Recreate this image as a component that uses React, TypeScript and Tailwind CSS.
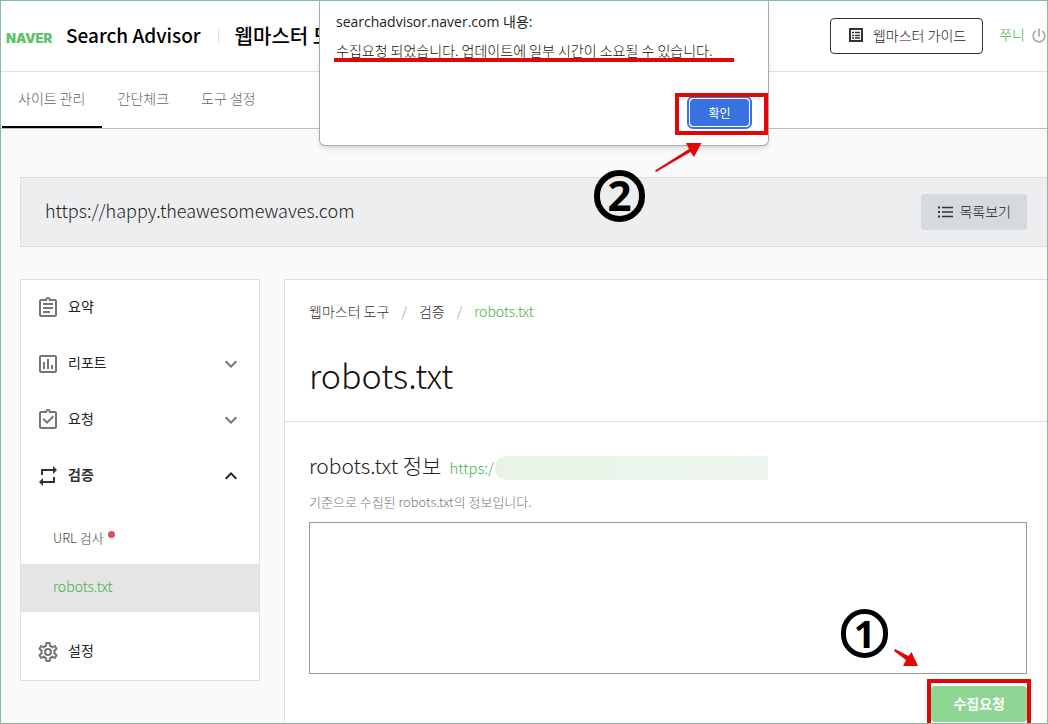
import type { ReactNode } from "react";

const ICONS = {
  clipboardText:
    "M19,3H14.82C14.4,1.84 13.3,1 12,1C10.7,1 9.6,1.84 9.18,3H5A2,2 0 0,0 3,5V19A2,2 0 0,0 5,21H19A2,2 0 0,0 21,19V5A2,2 0 0,0 19,3M12,3A1,1 0 0,1 13,4A1,1 0 0,1 12,5A1,1 0 0,1 11,4A1,1 0 0,1 12,3M5,5H19V19H5V5M7,7H17V9H7V7M7,11H17V13H7V11M7,15H14V17H7V15Z",
  chartBox:
    "M9,17H7V10H9V17M13,17H11V7H13V17M17,17H15V13H17V17M19,19H5V5H19V19.1M19,3H5C3.9,3 3,3.9 3,5V19C3,20.1 3.9,21 5,21H19C20.1,21 21,20.1 21,19V5C21,3.9 20.1,3 19,3Z",
  clipboardCheck:
    "M19,3H14.82C14.4,1.84 13.3,1 12,1C10.7,1 9.6,1.84 9.18,3H5A2,2 0 0,0 3,5V19A2,2 0 0,0 5,21H19A2,2 0 0,0 21,19V5A2,2 0 0,0 19,3M12,3A1,1 0 0,1 13,4A1,1 0 0,1 12,5A1,1 0 0,1 11,4A1,1 0 0,1 12,3M5,5H19V19H5V5M7.91,10.08L6.5,11.5L11,16L18,9L16.59,7.58L11,13.17L7.91,10.08Z",
  repeat:
    "M17,17H7V14L3,18L7,22V19H19V13H17M7,7H17V10L21,6L17,2V5H5V11H7V7Z",
  cog: "M12,8A4,4 0 0,1 16,12A4,4 0 0,1 12,16A4,4 0 0,1 8,12A4,4 0 0,1 12,8M12,10A2,2 0 0,0 10,12A2,2 0 0,0 12,14A2,2 0 0,0 14,12A2,2 0 0,0 12,10M10,22C9.75,22 9.54,21.82 9.5,21.58L9.13,18.93C8.5,18.68 7.96,18.34 7.44,17.94L4.95,18.95C4.73,19.03 4.46,18.95 4.34,18.73L2.34,15.27C2.21,15.05 2.27,14.78 2.46,14.63L4.57,12.97L4.5,12L4.57,11L2.46,9.37C2.27,9.22 2.21,8.95 2.34,8.73L4.34,5.27C4.46,5.05 4.73,4.96 4.95,5.05L7.44,6.05C7.96,5.66 8.5,5.32 9.13,5.07L9.5,2.42C9.54,2.18 9.75,2 10,2H14C14.25,2 14.46,2.18 14.5,2.42L14.87,5.07C15.5,5.32 16.04,5.66 16.56,6.05L19.05,5.05C19.27,4.96 19.54,5.05 19.66,5.27L21.66,8.73C21.79,8.95 21.73,9.22 21.54,9.37L19.43,11L19.5,12L19.43,13L21.54,14.63C21.73,14.78 21.79,15.05 21.66,15.27L19.66,18.73C19.54,18.95 19.27,19.04 19.05,18.95L16.56,17.95C16.04,18.34 15.5,18.68 14.87,18.93L14.5,21.58C14.46,21.82 14.25,22 14,22H10M11.25,4L10.88,6.61C9.68,6.86 8.62,7.5 7.85,8.39L5.44,7.35L4.69,8.65L6.8,10.2C6.4,11.37 6.4,12.64 6.8,13.8L4.68,15.36L5.43,16.66L7.86,15.62C8.63,16.5 9.68,17.14 10.87,17.38L11.24,20H12.76L13.13,17.39C14.32,17.14 15.37,16.5 16.14,15.62L18.57,16.66L19.32,15.36L17.2,13.81C17.6,12.64 17.6,11.37 17.2,10.2L19.31,8.65L18.56,7.35L16.15,8.39C15.38,7.5 14.32,6.86 13.12,6.62L12.75,4H11.25Z",
  chevronDown: "M7.41,8.58L12,13.17L16.59,8.58L18,10L12,16L6,10L7.41,8.58Z",
  chevronUp: "M7.41,15.41L12,10.83L16.59,15.41L18,14L12,8L6,14L7.41,15.41Z",
  power:
    "M16.56,5.44L15.11,6.89C16.84,7.94 18,9.83 18,12A6,6 0 0,1 12,18A6,6 0 0,1 6,12C6,9.83 7.16,7.94 8.88,6.88L7.44,5.44C5.36,6.88 4,9.28 4,12A8,8 0 0,0 12,20A8,8 0 0,0 20,12C20,9.28 18.64,6.88 16.56,5.44M13,3H11V13H13",
};

function Icon({ path, className }: { path: string; className: string }) {
  return (
    <svg viewBox="0 0 24 24" fill="currentColor" fillRule="evenodd" className={className} aria-hidden="true">
      <path d={path} />
    </svg>
  );
}

const TABS = ["사이트 관리", "간단체크", "도구 설정"];

type MenuItemProps = {
  label: string;
  icon: string;
  chevron?: "up" | "down";
};

function MenuItem({ label, icon, chevron }: MenuItemProps) {
  const open = chevron === "up";
  return (
    <button
      type="button"
      aria-expanded={chevron ? open : undefined}
      className={
        open
          ? "flex h-14 w-full items-center pr-4 pl-[15px] text-left text-sm font-bold text-[#333]"
          : "flex h-14 w-full items-center pr-4 pl-[15px] text-left text-sm text-[#222]"
      }
    >
      <Icon path={icon} className={open ? "size-6 text-[#333]" : "size-6 text-[#757575]"} />
      <span className="ml-2 flex-1 pb-1">{label}</span>
      {chevron && (
        <Icon
          path={open ? ICONS.chevronUp : ICONS.chevronDown}
          className={open ? "size-6 text-[#222]" : "size-6 text-[#757575]"}
        />
      )}
    </button>
  );
}

function Header() {
  return (
    <header className="flex h-[72px] items-center border-b border-[#e0e0e0] bg-white pl-[6px]">
      <a href="#" className="flex items-center text-[19px] font-medium text-black">
        <span className="w-[60px] pt-1 font-[Inter] text-[13px] leading-4 font-black text-[#5ac466]">
          NAVER
        </span>
        <span className="whitespace-nowrap">Search Advisor</span>
      </a>
      <span className="mr-4 ml-[17px] h-[14px] w-px bg-[#ddd]" />
      <a href="#" className="text-xl font-medium whitespace-nowrap text-black">
        웹마스터 도구
      </a>
      <div className="-mr-px ml-auto flex items-center">
        <button
          type="button"
          className="flex h-9 items-center gap-2 rounded border border-[#333] px-4 pb-0.5 text-sm font-light whitespace-nowrap text-[#222]"
        >
          <svg viewBox="0 0 18 18" className="size-[18px]" fill="none" stroke="#333" aria-hidden="true">
            <rect x="3" y="3" width="12" height="12" strokeWidth="2" />
            <path d="M5 6.5h2M8 6.5h5M5 9.5h2M8 9.5h5M5 12h2M8 12h5" strokeWidth="1.5" />
          </svg>
          웹마스터 가이드
        </button>
        <a href="#" className="ml-4 pb-1 text-sm font-light whitespace-nowrap text-[#43b14b]">
          쭈니
        </a>
        <button type="button" aria-label="로그아웃" className="ml-1">
          <Icon path={ICONS.power} className="size-5 text-[#aaa]" />
        </button>
      </div>
    </header>
  );
}

function Tabs() {
  return (
    <nav className="flex h-[57px] border-b border-[#bdbdbd] bg-white pl-[2px]">
      {TABS.map((tab, i) => (
        <a
          key={tab}
          href="#"
          className={
            i === 0
              ? "flex items-center border-b-2 border-black px-4 pb-0.5 text-sm font-light text-[#666]"
              : "flex items-center border-b-2 border-transparent px-4 pb-0.5 text-sm font-light text-[#666]"
          }
        >
          {tab}
        </a>
      ))}
    </nav>
  );
}

function SiteBar() {
  return (
    <div className="mt-12 ml-5 flex h-[70px] items-center justify-between border border-[#dcdde0] bg-[#edeef0] pr-5 pl-6">
      <span className="pb-1 text-lg font-light text-[#222]">https://happy.theawesomewaves.com</span>
      <button
        type="button"
        className="flex h-9 items-center gap-1 rounded bg-[#d6d9de] px-4 text-sm font-light text-[#222]"
      >
        <svg viewBox="0 0 18 18" className="size-[18px]" stroke="#333" aria-hidden="true">
          <path d="M1 4.5h2M1 9h2M1 13.5h2" strokeWidth="2" />
          <path d="M5 4.5h11M5 9h11M5 13.5h11" strokeWidth="1.5" />
        </svg>
        <span className="pb-0.5">목록보기</span>
      </button>
    </div>
  );
}

function Sidebar() {
  return (
    <aside className="w-60 shrink-0 self-start border border-[#dcdde0] bg-white">
      <MenuItem label="요약" icon={ICONS.clipboardText} />
      <MenuItem label="리포트" icon={ICONS.chartBox} chevron="down" />
      <MenuItem label="요청" icon={ICONS.clipboardCheck} chevron="down" />
      <MenuItem label="검증" icon={ICONS.repeat} chevron="up" />
      <div className="py-3">
        <a href="#" className="flex h-12 items-center pb-1 pl-8 text-[13px] font-light text-[#444]">
          URL 검사
          <span className="mb-2 ml-1 size-[7px] rounded-full bg-[#d9515a]" />
        </a>
        <a
          href="#"
          className="flex h-12 items-center bg-[#e5e5e5] pb-1 pl-8 text-sm font-light text-[#3fae4b]"
        >
          robots.txt
        </a>
      </div>
      <MenuItem label="설정" icon={ICONS.cog} />
    </aside>
  );
}

// Red outline drawn round a control that the guide points at
function Highlight({ className, children }: { className: string; children: ReactNode }) {
  return (
    <div className="relative">
      {children}
      <span className={`pointer-events-none absolute border-4 border-[#e30606] ${className}`} />
    </div>
  );
}

function RobotsPanel() {
  return (
    <main className="min-w-0 flex-1 border-t border-l border-[#dcdde0] bg-white">
      <div className="h-[142px] border-b border-[#dcdde0] px-6 pt-[19px]">
        <nav aria-label="breadcrumb" className="flex gap-3 text-sm leading-6 font-light text-[#333]">
          <a href="#">웹마스터 도구</a>
          <span className="text-[#999]">/</span>
          <a href="#">검증</a>
          <span className="text-[#999]">/</span>
          <span className="text-[#43b14b]">robots.txt</span>
        </nav>
        <h1 className="mt-7 text-[34px] leading-12 font-light text-[#111]">robots.txt</h1>
      </div>
      <section className="pt-7 pr-[21px] pl-6">
        <div className="flex h-8 items-center">
          <h2 className="text-[21px] font-light whitespace-nowrap text-[#222]">robots.txt 정보</h2>
          <a href="#" className="ml-2 w-[46px] pt-1 text-[15px] font-light whitespace-nowrap text-[#43b14b]">
            https:/
          </a>
          <span className="mt-1 h-6 w-[273px] rounded-l-xl bg-linear-to-r from-[#e8f3e6] via-[#ebf5eb] to-[#eff6ef]" />
        </div>
        <p className="mt-2 text-[13px] leading-6 font-light text-[#777]">
          기준으로 수집된 robots.txt의 정보입니다.
        </p>
        <textarea
          aria-label="robots.txt 정보"
          readOnly
          className="mt-2 block h-[152px] w-full resize-none border border-[#999] bg-white"
        />
        <div className="mt-3 flex justify-end">
          <Highlight className="-inset-x-1 -top-[7px] -bottom-2">
            <button
              type="button"
              className="h-9 rounded bg-[#8dd694] px-[22px] pb-0.5 text-sm font-bold text-white"
            >
              수집요청
            </button>
          </Highlight>
        </div>
      </section>
    </main>
  );
}

function AlertDialog() {
  return (
    <div
      role="alertdialog"
      aria-labelledby="alert-title"
      aria-describedby="alert-text"
      className="absolute top-0 left-[319px] w-[450px] rounded-b-md border border-t-0 border-[#aaa] bg-white px-4 pb-4 shadow-md"
    >
      <h2
        id="alert-title"
        className="pt-3 font-['Open_Sans','Noto_Sans_CJK_KR',sans-serif] text-sm leading-5 text-[#222]"
      >
        searchadvisor.naver.com 내용:
      </h2>
      <div className="relative">
        <p id="alert-text" className="pt-2 text-sm leading-5 font-light whitespace-nowrap text-[#111]">
          수집요청 되었습니다. 업데이트에 일부 시간이 소요될 수 있습니다.
        </p>
        <span className="absolute top-[26px] -left-0.5 h-1 w-[400px] bg-[#e30606]" />
      </div>
      <div className="mt-9 flex justify-end">
        <Highlight className="-top-[3px] -right-4 -bottom-1.5 -left-3">
          <button
            type="button"
            className="h-[33px] w-[65px] rounded-md border-2 border-[#3871e0] bg-white p-px"
          >
            <span className="flex h-full items-center justify-center rounded bg-[#3871e0] text-xs text-white">
              확인
            </span>
          </button>
        </Highlight>
      </div>
    </div>
  );
}

export default function App() {
  return (
    <div className="relative h-screen overflow-hidden bg-[#fafafa] font-['Noto_Sans_CJK_KR','Noto_Sans',sans-serif]">
      <div className="flex h-full flex-col">
        <Header />
        <Tabs />
        <SiteBar />
        <div className="mt-8 ml-5 flex flex-1 gap-6">
          <Sidebar />
          <RobotsPanel />
        </div>
      </div>

      <AlertDialog />

      {/* Step markers of the guide */}
      <span className="absolute top-[170px] left-[594px] flex h-[52px] w-[51px] items-center justify-center rounded-full border-6 border-black pb-0.5 font-['Open_Sans',sans-serif] text-[42px] leading-10 font-bold text-black">
        2
      </span>
      <span className="absolute top-[609px] left-[841px] flex h-[49px] w-[47px] items-center justify-center rounded-full border-5 border-black pb-0.5 font-['Open_Sans',sans-serif] text-[38px] leading-10 font-bold text-black">
        1
      </span>
      <svg viewBox="0 0 48 30" className="absolute top-[142px] left-[654px] h-[30px] w-12" fill="#e30606" aria-hidden="true">
        <path d="M1 28.5L35 7 32 1H47.500L40 15 36.500 10 2 30Z" />
      </svg>
      <svg viewBox="0 0 26 18" className="absolute top-[649px] left-[893px] h-[18px] w-[26px]" fill="#e30606" aria-hidden="true">
        <path d="M2 0L15.500 7 18.500 3 25 17H10L13 11 1 2Z" />
      </svg>

      <div className="pointer-events-none absolute inset-0 border border-[#84bd9c]" />
    </div>
  );
}
